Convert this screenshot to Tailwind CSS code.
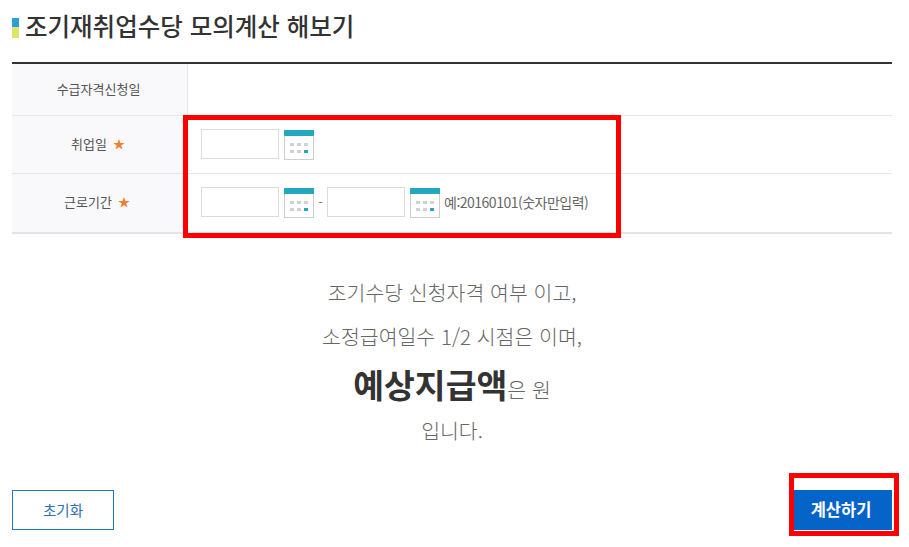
<!DOCTYPE html>
<html lang="ko">
  <head>
    <meta charset="UTF-8" />
    <script src="https://cdn.jsdelivr.net/npm/@tailwindcss/browser@4"></script>
    <title>조기재취업수당 모의계산</title>
  </head>
  <body class="relative w-[909px] h-[547px] overflow-hidden bg-white font-['Noto_Sans_CJK_KR','Noto_Sans',sans-serif] text-[#333]">
    <div class="h-[62px] px-3 pt-[14px]">
      <h2 class="flex items-center gap-[6px] h-6 text-[24.5px] font-medium leading-6 text-[#333]">
        <span class="flex flex-col w-[7px] h-5 mt-[4px]">
          <span class="h-[9px] bg-[#2d9fd6]"></span>
          <span class="h-[11px] bg-[#dbe66b]"></span>
        </span>
        조기재취업수당 모의계산 해보기
      </h2>
    </div>

    <div class="mx-3 w-[880px] border-t-2 border-[#333] border-b-2 border-b-[#e4e4e4]">
      <div class="flex h-[52px] border-b border-[#e6e6e6]">
        <div class="flex w-[176px] items-center justify-center pb-[2px] pr-[2px] bg-[#f9f9fb] border-r border-[#e6e6e6] text-[13px] text-[#555]">수급자격신청일</div>
        <div class="flex-1"></div>
      </div>
      <div class="flex h-[58px] border-b border-[#e6e6e6]">
        <div class="flex w-[176px] items-center justify-center gap-[6px] pb-[2px] pr-[3px] bg-[#f9f9fb] border-r border-[#e6e6e6] text-[13px] text-[#555]">취업일 <span class="text-[12px] leading-none text-[#f0802b]">★</span></div>
        <div class="flex flex-1 items-center pl-[13px] pb-[1px]">
          <div class="w-[78px] h-[30px] border border-[#dcdcdc]"></div>
          <svg class="ml-[5px] mt-[2px]" width="30" height="30" viewBox="0 0 30 30">
            <rect x="0.5" y="0.5" width="29" height="29" fill="#fff" stroke="#cfcfcf" />
            <rect width="30" height="6" fill="#22a9bf" />
            <g fill="#d2d2d2">
              <rect x="6" y="13" width="4" height="3" /><rect x="13" y="13" width="4" height="3" /><rect x="20" y="13" width="4" height="3" />
              <rect x="6" y="20" width="4" height="3" /><rect x="13" y="20" width="4" height="3" />
            </g>
            <rect x="20" y="20" width="4" height="3" fill="#22a9bf" />
          </svg>
        </div>
      </div>
      <div class="flex h-[58px]">
        <div class="flex w-[176px] items-center justify-center gap-[6px] pb-[3px] pr-[5px] bg-[#f9f9fb] border-r border-[#e6e6e6] text-[13px] text-[#555]">근로기간 <span class="text-[12px] leading-none text-[#f0802b]">★</span></div>
        <div class="flex flex-1 items-center pl-[13px] pb-[2px]">
          <div class="w-[78px] h-[30px] border border-[#dcdcdc]"></div>
          <svg class="ml-[5px] mt-[2px]" width="30" height="30" viewBox="0 0 30 30">
            <rect x="0.5" y="0.5" width="29" height="29" fill="#fff" stroke="#cfcfcf" />
            <rect width="30" height="6" fill="#22a9bf" />
            <g fill="#d2d2d2">
              <rect x="6" y="13" width="4" height="3" /><rect x="13" y="13" width="4" height="3" /><rect x="20" y="13" width="4" height="3" />
              <rect x="6" y="20" width="4" height="3" /><rect x="13" y="20" width="4" height="3" />
            </g>
            <rect x="20" y="20" width="4" height="3" fill="#22a9bf" />
          </svg>
          <span class="w-[13px] text-center text-[12px] text-[#666]">-</span>
          <div class="w-[78px] h-[30px] border border-[#dcdcdc]"></div>
          <svg class="ml-[5px] mt-[2px]" width="30" height="30" viewBox="0 0 30 30">
            <rect x="0.5" y="0.5" width="29" height="29" fill="#fff" stroke="#cfcfcf" />
            <rect width="30" height="6" fill="#22a9bf" />
            <g fill="#d2d2d2">
              <rect x="6" y="13" width="4" height="3" /><rect x="13" y="13" width="4" height="3" /><rect x="20" y="13" width="4" height="3" />
              <rect x="6" y="20" width="4" height="3" /><rect x="13" y="20" width="4" height="3" />
            </g>
            <rect x="20" y="20" width="4" height="3" fill="#22a9bf" />
          </svg>
          <span class="ml-[4px] text-[14px] tracking-[-0.5px] text-[#666]">예:20160101(숫자만입력)</span>
        </div>
      </div>
    </div>

    <div class="flex flex-col items-center w-[904px] pt-[37px] text-[#666] text-[20.5px] font-light">
      <p class="h-[43px] leading-[43px]">조기수당 신청자격 여부 이고,</p>
      <p class="h-[43px] mt-[1px] leading-[43px]">소정급여일수 1/2 시점은 이며,</p>
      <p class="h-[50px] mt-[1px] leading-[50px]"><strong class="text-[33.5px] font-bold text-[#333]">예상지급액</strong>은 원</p>
      <p class="h-[43px] leading-[43px]">입니다.</p>
    </div>

    <div class="flex justify-between items-start w-[880px] mx-3 mt-[38px]">
      <button class="w-[102px] h-10 border border-[#1f78c1] text-[14.5px] text-[#2a6fb0]">초기화</button>
      <button class="w-[98px] h-10 pr-[4px] pb-[2px] bg-[#0564c8] text-[16.5px] font-bold text-white">계산하기</button>
    </div>

    <!-- red annotation boxes -->
    <div class="absolute left-[183px] top-[115px] w-[438px] h-[123px] border-[5px] border-[#f00]"></div>
    <div class="absolute left-[789px] top-[473px] w-[110px] h-[63px] border-[5px] border-[#f00]"></div>
  </body>
</html>
